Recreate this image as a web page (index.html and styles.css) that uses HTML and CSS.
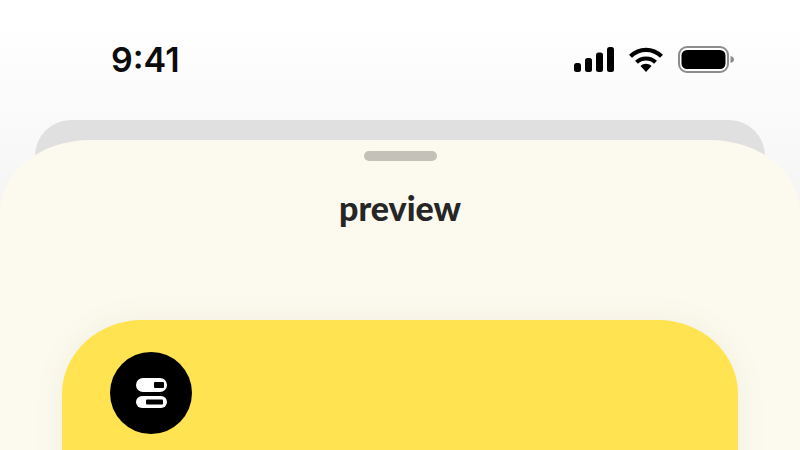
FILE: index.html
```html
<!DOCTYPE html>
<html lang="en">
<head>
<meta charset="utf-8">
<title>preview</title>
<link rel="stylesheet" href="styles.css">
</head>
<body>
<div class="phone">
  <header class="status">
    <span class="time">9:41</span>
    <div class="status-icons">
      <svg class="signal" width="40" height="25" viewBox="0 0 40 25"><rect x="0" y="16" width="7" height="9" rx="2.500"/><rect x="11" y="11" width="7" height="14" rx="2.500"/><rect x="22" y="5.500" width="7" height="19.500" rx="2.500"/><rect x="33" y="0" width="7" height="25" rx="2.500"/></svg>
      <svg class="wifi" width="34" height="25" viewBox="0 0 34 25"><path d="M1.500 9.300C10.500 .6 23.500 .6 32.500 9.300" fill="none" stroke="#000" stroke-width="4.200"/><path d="M7.500 15.300C12.800 10.200 21.200 10.200 26.500 15.300" fill="none" stroke="#000" stroke-width="4.200"/><path d="M11.500 19C14.500 15.900 19.500 15.900 22.500 19L17 25Z"/></svg>
      <svg class="battery" width="56" height="27" viewBox="0 0 56 27"><rect x="1" y="1" width="49" height="25" rx="8" fill="none" stroke="#8c8c8c" stroke-width="2"/><rect x="3.500" y="4" width="44" height="19" rx="5.500"/><path d="M52.500 10v7c2-.5 3.500-1.900 3.500-3.500s-1.500-3-3.500-3.500z" fill="#8c8c8c"/></svg>
    </div>
  </header>
  <div class="sheet-back">
    <main class="sheet">
      <div class="grabber"></div>
      <h1 class="title">preview</h1>
      <section class="card">
        <div class="badge">
          <svg width="31" height="30" viewBox="0 0 31 30"><rect x="0" y="0" width="31" height="14" rx="7" fill="#fff"/><rect x="18" y="4" width="10" height="6" rx="1" fill="#000"/><rect x="0" y="18" width="31" height="12" rx="6" fill="#fff"/><rect x="10" y="21.500" width="17" height="5" rx="1" fill="#000"/></svg>
        </div>
      </section>
    </main>
  </div>
</div>
</body>
</html>
```
FILE: styles.css
```css
* { box-sizing: border-box; }
html, body { margin: 0; height: 100%; }
body { overflow: hidden; background: #f4f5f4; }
.phone {
  width: 800px;
  height: 450px;
  overflow: hidden;
  display: flex;
  flex-direction: column;
  background: linear-gradient(180deg, #ffffff 0%, #ffffff 5%, #f4f5f4 45%);
}
.status {
  height: 120px;
  flex: none;
  display: flex;
  justify-content: space-between;
  align-items: flex-start;
  padding: 39px 66px 0 111px;
}
.time {
  font-family: Inter, "Liberation Sans", sans-serif;
  font-weight: 600;
  font-size: 34px;
  line-height: 41px;
  color: #0c0c0c;
}
.status-icons { display: flex; align-items: center; gap: 15px; padding-top: 7px; }
.status-icons svg { display: block; }
.sheet-back {
  flex: 1;
  margin: 0 35px;
  padding-top: 20px;
  background: #e0e0e0;
  border-radius: 36px 36px 0 0;
}
.sheet {
  margin: 0 -35px;
  height: 100%;
  background: #fcf9ee;
  border-radius: 90px 90px 0 0 / 72px 72px 0 0;
  padding: 11px 62px 0;
  display: flex;
  flex-direction: column;
  align-items: center;
}
.grabber { width: 73px; height: 10px; border-radius: 5px; background: #c4c2b8; flex: none; }
.title {
  margin: 27px 0 0;
  font-family: Lato, "Noto Sans", sans-serif;
  font-weight: 900;
  font-size: 34px;
  line-height: 40px;
  color: #262626;
}
.card {
  align-self: stretch;
  flex: none;
  margin-top: 92px;
  height: 200px;
  background: #ffe350;
  border-radius: 80px 80px 0 0 / 74px 74px 0 0;
  padding: 32px 48px;
  box-shadow: 0 0 30px rgba(120, 110, 80, .08);
}
.badge {
  width: 82px;
  height: 82px;
  border-radius: 50%;
  background: #000;
  display: flex;
  align-items: center;
  justify-content: center;
}
```
